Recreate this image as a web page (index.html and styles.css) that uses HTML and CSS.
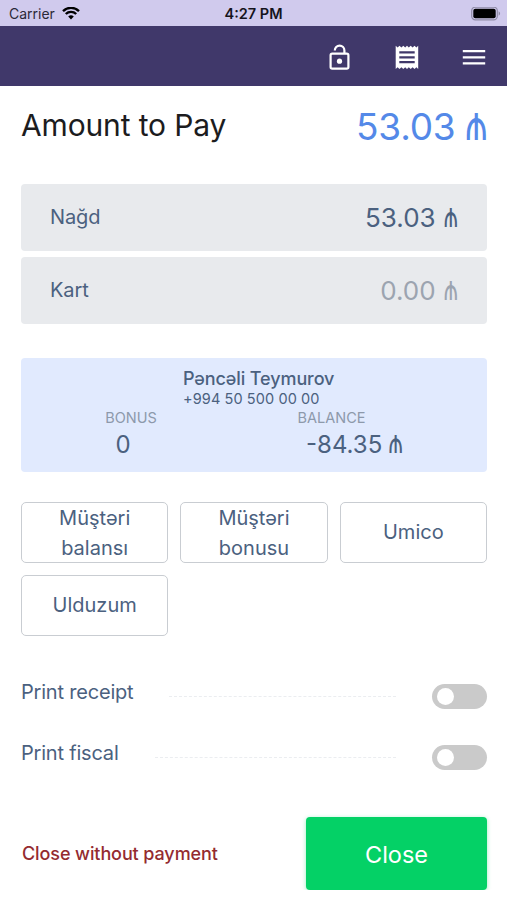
FILE: index.html
```html
<!DOCTYPE html>
<html lang="en">
<head>
    <meta charset="UTF-8">
    <meta name="viewport" content="width=device-width, initial-scale=1.0">
    <title>Amount to Pay</title>
    <link rel="stylesheet" href="styles.css">
</head>
<body>
    <div class="status-bar">
        <div class="carrier">
            <span>Carrier</span>
            <svg width="18" height="14" viewBox="0 0 18 14">
                <path d="M1 4.1a11.5 11.5 0 0 1 16 0M3.8 7a7.4 7.4 0 0 1 10.4 0" fill="none" stroke="#000" stroke-width="2.4"/>
                <path d="M9 12.4 6.2 9.5a4 4 0 0 1 5.6 0z"/>
            </svg>
        </div>
        <div class="time">4:27 PM</div>
        <div class="power">
            <svg width="30" height="14" viewBox="0 0 30 14">
                <rect x=".7" y=".2" width="25.6" height="12.6" rx="3.6" fill="none" stroke="#8f8ba6" stroke-width="1.2"/>
                <rect x="2.3" y="1.8" width="22.4" height="9.4" rx="2"/>
                <path d="M27.6 4.3c2 .8 2 3.6 0 4.4z" fill="#8f8ba6"/>
            </svg>
        </div>
    </div>

    <div class="menu-bar">
        <a href="#" class="menu-item" aria-label="Unlock">
            <svg width="28" height="28" viewBox="0 0 28 28">
                <rect x="4.6" y="9.7" width="17.8" height="15" rx="1.6" fill="none" stroke="#fff" stroke-width="2.2"/>
                <path d="M8.8 6.4a4.8 4.8 0 0 1 9.6 0v3.4" fill="none" stroke="#fff" stroke-width="2.2"/>
                <circle cx="13.5" cy="17.2" r="2.6" fill="#fff"/>
            </svg>
        </a>
        <a href="#" class="menu-item" aria-label="Receipts">
            <svg width="28" height="28" viewBox="0 0 28 28">
                <path d="M2.7 1.7l1.9 1.7 1.9-1.7 1.9 1.7 1.9-1.7 1.9 1.7 1.8-1.7 1.8 1.7 1.9-1.7 1.9 1.7 1.9-1.7 1.9 1.7 1.8-1.7v23.2l-1.8-1.7-1.9 1.7-1.9-1.7-1.9 1.7-1.9-1.7-1.8 1.7-1.8-1.7-1.9 1.7-1.9-1.7-1.9 1.7-1.9-1.7-1.9 1.7z" fill="#fff"/>
                <path d="M6.3 8.4h15.4M6.3 13.3h15.4M6.3 18.2h15.4" stroke="#40386a" stroke-width="2.2"/>
            </svg>
        </a>
        <a href="#" class="menu-item" aria-label="Menu">
            <svg width="28" height="28" viewBox="0 0 28 28">
                <path d="M2.8 7.2h22.4M2.8 13.3h22.4M2.8 19.4h22.4" stroke="#fff" stroke-width="2.3"/>
            </svg>
        </a>
    </div>

    <div class="container">
        <div class="header">
            <h1>Amount to Pay</h1>
            <div class="total">53.03 <span class="manat">₼</span></div>
        </div>

        <div class="payments">
            <div class="payment">
                <span class="label">Nağd</span>
                <span class="amount">53.03 <span class="manat">₼</span></span>
            </div>
            <div class="payment">
                <span class="label">Kart</span>
                <span class="amount empty">0.00 <span class="manat">₼</span></span>
            </div>
        </div>

        <div class="customer">
            <div class="person">
                <div class="name">Pəncəli Teymurov</div>
                <div class="phone">+994 50 500 00 00</div>
            </div>
            <div class="stats">
                <div class="stat bonus">
                    <div class="caption">BONUS</div>
                    <div class="value">0</div>
                </div>
                <div class="stat balance">
                    <div class="caption">BALANCE</div>
                    <div class="value">-84.35 <span class="manat">₼</span></div>
                </div>
            </div>
        </div>

        <div class="methods">
            <button class="method">Müştəri balansı</button>
            <button class="method">Müştəri bonusu</button>
            <button class="method">Umico</button>
            <button class="method">Ulduzum</button>
        </div>

        <div class="options">
            <div class="option">
                <span class="option-name">Print receipt</span>
                <span class="dots"></span>
                <span class="switch"></span>
            </div>
            <div class="option">
                <span class="option-name">Print fiscal</span>
                <span class="dots"></span>
                <span class="switch"></span>
            </div>
        </div>

        <div class="actions">
            <a href="#" class="no-payment">Close without payment</a>
            <button class="close-btn">Close</button>
        </div>
    </div>
</body>
</html>
```
FILE: styles.css
```css
* {
    box-sizing: border-box;
}
body {
    margin: 0;
    font-family: Inter, "Liberation Sans", sans-serif;
    background-color: #fff;
    color: #4b617f;
}
svg {
    display: block;
}
.status-bar {
    display: grid;
    grid-template-columns: 1fr auto 1fr;
    align-items: center;
    height: 26px;
    padding: 1px 6px 0 9px;
    background-color: #d0caed;
    color: #2b2938;
    font-size: 14px;
}
.carrier {
    display: flex;
    align-items: center;
    gap: 7px;
}
.time {
    color: #15141c;
    font-weight: 600;
    font-size: 14.5px;
    padding-right: 3px;
}
.power {
    display: flex;
    justify-content: flex-end;
}
.menu-bar {
    display: flex;
    justify-content: flex-end;
    align-items: center;
    gap: 39px;
    height: 60px;
    padding: 3px 19px 0 0;
    background-color: #40386a;
}
.container {
    padding: 0 20px 0 21px;
}
.header {
    display: flex;
    justify-content: space-between;
    align-items: center;
    height: 80px;
}
h1 {
    margin: 0;
    padding-bottom: 2px;
    font-size: 30px;
    font-weight: 400;
    letter-spacing: -0.15px;
    color: #1c1c1e;
}
.total {
    font-size: 37px;
    letter-spacing: -0.2px;
    color: #5489e8;
}
/* the font draws this sign low and wide, stretch it up to the height of the digits */
.manat {
    display: inline-block;
    margin-left: -0.08em;
    font-family: Roboto, "DejaVu Sans", sans-serif;
    line-height: 1;
    transform: scale(0.9, 1.35);
    transform-origin: 90% 84%;
}
.payments {
    display: grid;
    gap: 6px;
    margin-top: 18px;
}
.payment {
    display: flex;
    justify-content: space-between;
    align-items: center;
    height: 67px;
    padding: 0 29px 1px;
    background-color: #e8eaed;
    border-radius: 4px;
}
.label {
    font-size: 20px;
    letter-spacing: -0.1px;
}
.amount {
    font-size: 26px;
}
.payment .manat {
    transform: scale(0.82, 1.35);
}
.amount.empty {
    color: #9ca4b0;
}
.customer {
    height: 114px;
    margin-top: 34px;
    padding-top: 9px;
    background-color: #e1eafe;
    border-radius: 4px;
}
.person {
    width: max-content;
    margin-left: 162px;
}
.name {
    font-size: 18px;
    font-weight: 500;
    line-height: 23px;
    letter-spacing: -0.1px;
}
.phone {
    font-size: 14.5px;
    line-height: 18px;
    letter-spacing: 0.1px;
}
.stats {
    display: flex;
    text-align: center;
}
.stat.bonus {
    width: 204px;
}
.stat.balance {
    width: 259px;
}
.caption {
    font-size: 14.5px;
    line-height: 19px;
    color: #8d99ab;
}
.bonus .caption {
    padding-left: 16px;
}
.balance .caption {
    padding-right: 46px;
}
.value {
    font-size: 24px;
    line-height: 35px;
}
.methods {
    display: grid;
    grid-template-columns: repeat(3, 1fr);
    gap: 12px;
    margin-top: 30px;
}
.method {
    height: 61px;
    padding: 0 20px 1px;
    border: 1px solid #c9cdd2;
    border-radius: 5px;
    background-color: #fff;
    color: inherit;
    font-family: inherit;
    font-size: 20px;
    line-height: 30px;
}
.options {
    margin-top: 25px;
}
.option {
    display: flex;
    align-items: center;
    height: 61px;
    font-size: 20px;
    letter-spacing: -0.2px;
}
.dots {
    flex: 1;
    margin: 10px 36px 0;
    border-top: 1px dashed #ebedf0;
}
.switch {
    width: 55px;
    height: 25px;
    margin-top: 9px;
    padding: 4px 5px;
    border-radius: 13px;
    background-color: #cacaca;
}
.switch::before {
    content: "";
    display: block;
    width: 17px;
    height: 17px;
    border-radius: 50%;
    background-color: #fff;
}
.actions {
    display: flex;
    justify-content: space-between;
    align-items: center;
    margin-top: 34px;
}
.no-payment {
    padding-left: 1px;
    color: #942b30;
    font-size: 18px;
    font-weight: 500;
    letter-spacing: -0.1px;
    text-decoration: none;
}
.close-btn {
    width: 181px;
    height: 73px;
    padding-top: 3px;
    border: none;
    border-radius: 4px;
    background-color: #04d166;
    box-shadow: 0 1px 4px rgba(4, 209, 102, 0.4);
    color: #fff;
    font-family: inherit;
    font-size: 23.5px;
}
```
